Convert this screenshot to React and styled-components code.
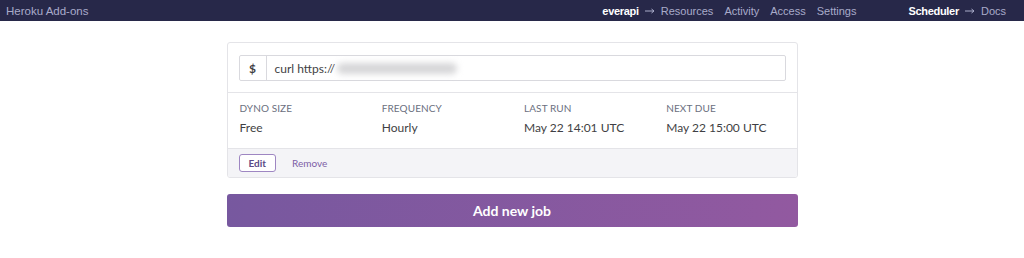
import React from 'react';
import styled, { createGlobalStyle } from 'styled-components';

const GlobalStyle = createGlobalStyle`
  body {
    margin: 0;
    background: #ffffff;
    font-family: Lato, "Open Sans", sans-serif;
  }
`;

const NavBar = styled.div`
  height: 21px;
  background-color: #272849;
  display: flex;
  align-items: center;
  padding: 0 18px 0 6px;
  font-family: "Liberation Sans", Arial, sans-serif;
  font-size: 11px;
  color: #a9abc9;
`;

const Brand = styled.div`
  flex: 1;
  font-size: 11.5px;
`;

const NavGroup = styled.div`
  display: flex;
  align-items: center;
  gap: 11px;
  margin-right: ${p => p.gap || 0}px;
`;

const NavItem = styled.span`
  color: ${p => (p.active ? '#ffffff' : '#a9abc9')};
  font-weight: ${p => (p.active ? 700 : 400)};
  letter-spacing: ${p => (p.active ? '-0.3px' : '0')};
`;

const ArrowIcon = styled.svg`
  margin: 1px -5px 0;
  flex: none;
`;

const Arrow = () => (
  <ArrowIcon width="10" height="6" viewBox="0 0 10 6">
    <path d="M0 3h9M6.5 1L9 3 6.5 5" fill="none" stroke="#a9abc9" strokeWidth="1" />
  </ArrowIcon>
);

const Main = styled.div`
  width: 571px;
  margin: 21px auto 0;
  display: flex;
  flex-direction: column;
  gap: 16px;
`;

const Card = styled.div`
  border: 1px solid #e4e4e8;
  border-radius: 3px;
  overflow: hidden;
`;

const CommandRow = styled.div`
  padding: 12px 11px 11px;
  border-bottom: 1px solid #e4e4e8;
`;

const CommandBox = styled.div`
  display: flex;
  height: 24px;
  border: 1px solid #d9d9de;
  border-radius: 2px;
  font-size: 12px;
  color: #3f3f44;
`;

const Prompt = styled.div`
  width: 26px;
  border-right: 1px solid #d9d9de;
  display: flex;
  align-items: center;
  justify-content: center;
  font-weight: 700;
`;

const Command = styled.div`
  display: flex;
  align-items: center;
  padding-left: 8px;
`;

const Blurred = styled.span`
  display: inline-block;
  width: 120px;
  height: 11px;
  margin-left: 2px;
  background: #d6d6d8;
  border-radius: 6px;
  filter: blur(3px);
`;

const InfoGrid = styled.div`
  display: grid;
  grid-template-columns: repeat(4, 1fr);
  padding: 9px 0 13px;
`;

const InfoCell = styled.div`
  padding-left: 12px;
  display: flex;
  flex-direction: column;
  gap: 6px;
`;

const Label = styled.div`
  font-size: 10px;
  color: #6b6f80;
  letter-spacing: 0.1px;
`;

const Value = styled.div`
  font-size: 12px;
  color: #3f3f44;
`;

const CardFooter = styled.div`
  background: #f4f4f7;
  border-top: 1px solid #e4e4e8;
  padding: 5px 11px;
  display: flex;
  align-items: center;
  gap: 16px;
`;

const EditButton = styled.button`
  height: 18px;
  padding: 0 9px;
  border: 1px solid #9e86c2;
  border-radius: 3px;
  background: #ffffff;
  color: #5b4a86;
  font-family: Lato, "Open Sans", sans-serif;
  font-size: 10px;
  font-weight: 700;
`;

const RemoveLink = styled.span`
  font-size: 10px;
  color: #7d5fa6;
`;

const AddButton = styled.button`
  height: 33px;
  border: none;
  border-radius: 3px;
  background: linear-gradient(90deg, #77589f, #9259a0);
  color: #ffffff;
  font-family: Lato, "Open Sans", sans-serif;
  font-size: 14px;
  font-weight: 700;
`;

const info = [
  ['DYNO SIZE', 'Free'],
  ['FREQUENCY', 'Hourly'],
  ['LAST RUN', 'May 22 14:01 UTC'],
  ['NEXT DUE', 'May 22 15:00 UTC'],
];

export default function App() {
  return (
    <>
      <GlobalStyle />
      <NavBar>
        <Brand>Heroku Add-ons</Brand>
        <NavGroup gap={52}>
          <NavItem active>everapi</NavItem>
          <Arrow />
          <NavItem>Resources</NavItem>
          <NavItem>Activity</NavItem>
          <NavItem>Access</NavItem>
          <NavItem>Settings</NavItem>
        </NavGroup>
        <NavGroup>
          <NavItem active>Scheduler</NavItem>
          <Arrow />
          <NavItem>Docs</NavItem>
        </NavGroup>
      </NavBar>
      <Main>
        <Card>
          <CommandRow>
            <CommandBox>
              <Prompt>$</Prompt>
              <Command>
                curl https://<Blurred />
              </Command>
            </CommandBox>
          </CommandRow>
          <InfoGrid>
            {info.map(([label, value]) => (
              <InfoCell key={label}>
                <Label>{label}</Label>
                <Value>{value}</Value>
              </InfoCell>
            ))}
          </InfoGrid>
          <CardFooter>
            <EditButton>Edit</EditButton>
            <RemoveLink>Remove</RemoveLink>
          </CardFooter>
        </Card>
        <AddButton>Add new job</AddButton>
      </Main>
    </>
  );
}
